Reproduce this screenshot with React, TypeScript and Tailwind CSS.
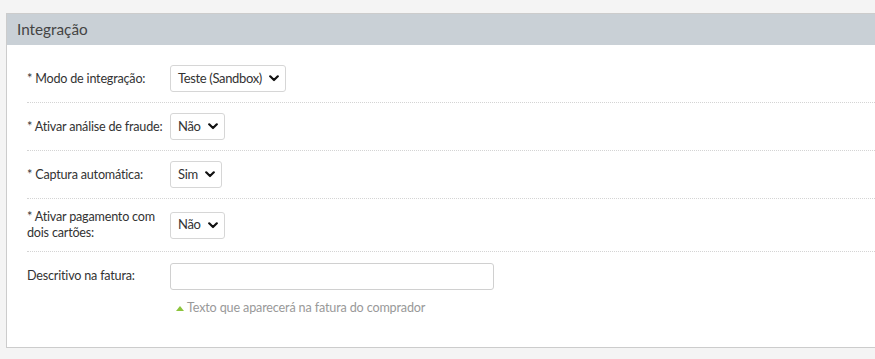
import React from "react";

function Chevron() {
  return (
    <svg width="10" height="7" viewBox="0 0 10 7" className="ml-[7px]">
      <path d="M1.2 1.3 L5 5 L8.8 1.3" fill="none" stroke="#111" strokeWidth="2.2" strokeLinecap="round" strokeLinejoin="round" />
    </svg>
  );
}

function Select({ value }: { value: string }) {
  return (
    <div className="flex h-[27px] items-center rounded-[3px] border border-[#d6d6d6] bg-white pl-[7px] pr-[6px] text-[13px] tracking-[-0.35px] text-[#333]">
      <span>{value}</span>
      <Chevron />
    </div>
  );
}

function Row({ label, children, last }: { label: React.ReactNode; children: React.ReactNode; last?: boolean }) {
  return (
    <div className={`flex items-center py-[10px] ${last ? "" : "border-b border-dotted border-[#d4d4d4]"}`}>
      <div className="w-[143px] shrink-0 text-[12.6px] leading-[16px] tracking-[-0.2px] text-[#333]">{label}</div>
      {children}
    </div>
  );
}

export default function App() {
  return (
    <div className="h-[359px] w-[875px] overflow-hidden bg-[#f4f4f4] pl-[6px] pt-[13px]" style={{ fontFamily: "Lato, 'Noto Sans', sans-serif" }}>
      <div className="h-[335px] w-[880px] border border-[#cccccc] bg-white">
        <div className="flex h-[31px] items-center bg-[#c9d0d6] pl-[10px] text-[15.3px] text-[#444]">Integração</div>
        <div className="pl-[20px] pt-[10px]">
          <Row label="* Modo de integração:"><Select value="Teste (Sandbox)" /></Row>
          <Row label="* Ativar análise de fraude:"><Select value="Não" /></Row>
          <Row label="* Captura automática:"><Select value="Sim" /></Row>
          <Row label={<>* Ativar pagamento com<br />dois cartões:</>}><Select value="Não" /></Row>
          <div className="flex pt-[11px]">
            <div className="flex h-[27px] w-[143px] shrink-0 items-center text-[12.6px] tracking-[-0.2px] text-[#333]">Descritivo na fatura:</div>
            <div className="flex flex-col">
              <div className="h-[27px] w-[324px] rounded-[3px] border border-[#d0d0d0] bg-white" />
              <div className="mt-[9px] flex items-center pl-[6px] text-[12.6px] tracking-[-0.15px] text-[#999]">
                <svg width="8" height="5" viewBox="0 0 8 5" className="mr-[3px]"><path d="M0 5 L4 0 L8 5 Z" fill="#8cc43c" /></svg>
                Texto que aparecerá na fatura do comprador
              </div>
            </div>
          </div>
        </div>
      </div>
    </div>
  );
}
